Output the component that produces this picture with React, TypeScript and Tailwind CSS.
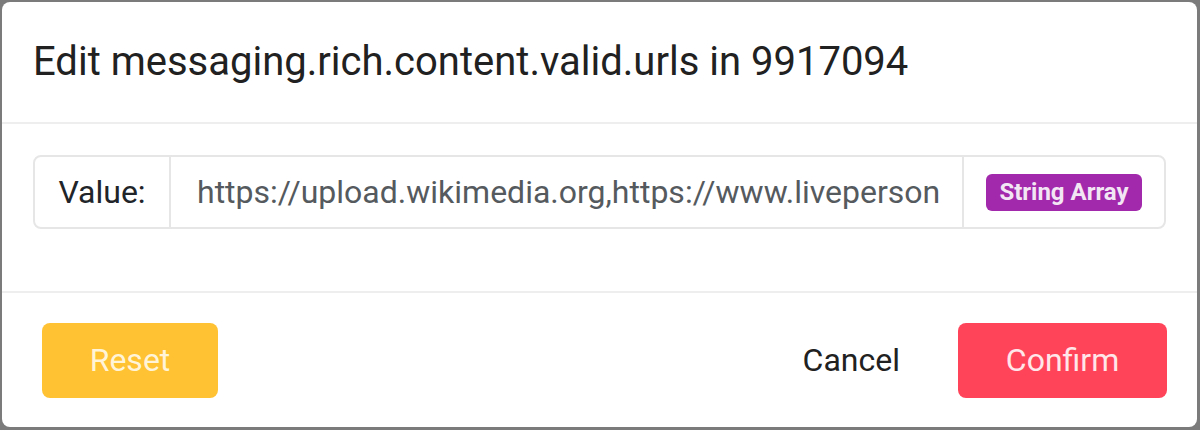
import React from "react";

const App: React.FC = () => {
  const value = "https://upload.wikimedia.org,https://www.liveperson.com,https://www.google.com";

  return (
    <div className="w-[1200px] h-[430px] bg-[#7b7b7b] pl-[2px] pt-[2px] pr-[3px] pb-[3px] font-['Roboto',sans-serif]">
      <div className="h-full rounded-[8px] bg-white flex flex-col">
        <div className="h-[122px] shrink-0 flex items-center px-[31px] border-b-2 border-[#eeeeee]">
          <h2 className="text-[40px] text-[#212121] leading-none whitespace-nowrap">
            Edit messaging.rich.content.valid.urls in 9917094
          </h2>
        </div>

        <div className="h-[169px] shrink-0 pt-[31px] px-[31px] border-b-2 border-[#eeeeee]">
          <div className="h-[74px] flex border-2 border-[#e6e6e6] rounded-[8px] overflow-hidden">
            <div className="w-[136px] shrink-0 flex items-center justify-center border-r-2 border-[#e6e6e6] text-[32px] text-[#212529]">
              Value:
            </div>
            <div className="flex-1 min-w-0 flex items-center pl-[26px] pr-[22px]">
              <div className="w-full overflow-hidden whitespace-nowrap text-[32px] text-[#555a5e]">
                {value}
              </div>
            </div>
            <div className="w-[202px] shrink-0 flex items-center justify-center border-l-2 border-[#e6e6e6]">
              <span className="px-[13px] h-[37px] flex items-center rounded-[6px] bg-[#a228ac] text-[#f3e6f4] text-[24px] font-bold whitespace-nowrap">
                String Array
              </span>
            </div>
          </div>
        </div>

        <div className="flex-1 flex items-center justify-between pl-[40px] pr-[30px]">
          <button className="w-[176px] h-[75px] rounded-[8px] bg-[#ffc233] text-[#fff4d8] text-[32px]">
            Reset
          </button>
          <div className="flex items-center gap-[58px]">
            <button className="text-[32px] text-[#212121]">Cancel</button>
            <button className="w-[209px] h-[75px] rounded-[8px] bg-[#ff445a] text-[#ffe6e9] text-[32px]">
              Confirm
            </button>
          </div>
        </div>
      </div>
    </div>
  );
};

export default App;
